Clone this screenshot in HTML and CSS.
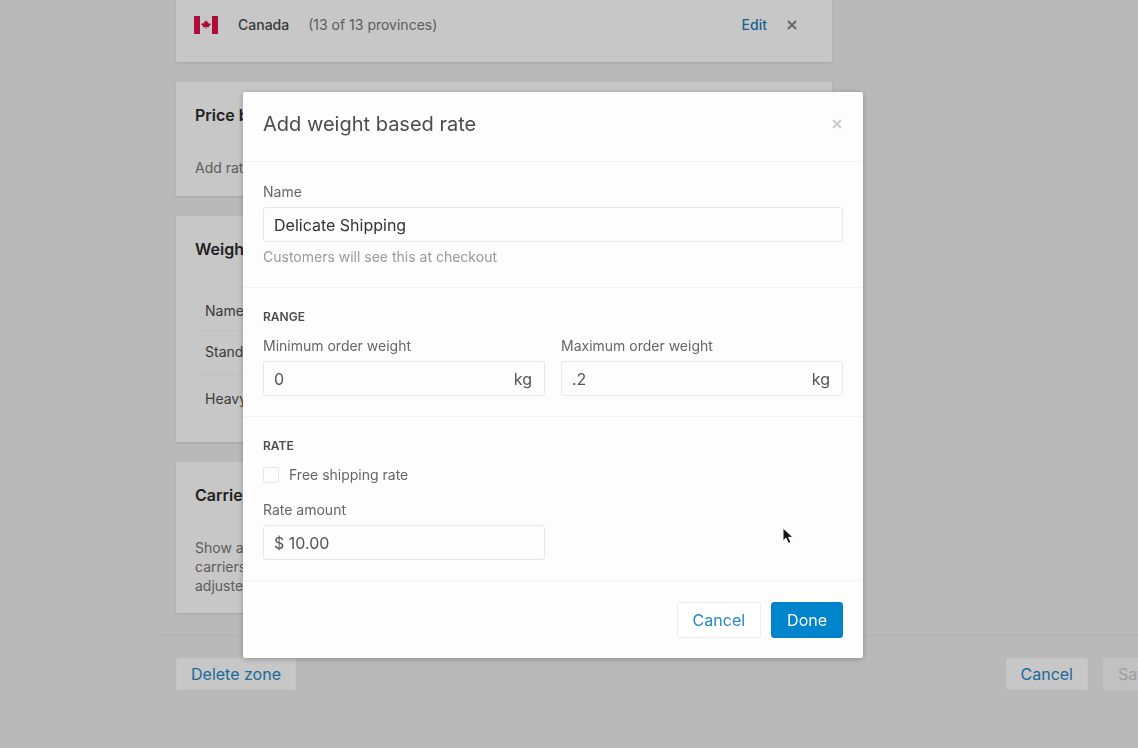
FILE: index.html
```html
<!DOCTYPE html>
<html lang="en">
<head>
    <meta charset="UTF-8">
    <meta name="viewport" content="width=device-width, initial-scale=1.0">
    <title>Shipping zone</title>
    <link rel="stylesheet" href="styles.css">
</head>
<body>
    <main class="page">
        <section class="card country">
            <svg class="flag" viewBox="0 0 26 20" aria-hidden="true">
                <path d="M1 1h6v18H1zM19 1h6v18h-6z"/>
                <path d="M13 5l1 2 1.200-.6-.3 2.400 1.500-1 .4 1 1.400.2-2.300 2.300.2 1-2.700-.4V14h-.8v-2.100l-2.700.4.200-1-2.300-2.300 1.400-.2.400-1 1.500 1-.3-2.400L12 7z"/>
            </svg>
            <strong>Canada</strong>
            <span class="provinces">(13 of 13 provinces)</span>
            <a href="#">Edit</a>
            <button class="close" aria-label="Remove Canada">
                <svg viewBox="0 0 10 10"><path d="M1 1l8 8M9 1l-8 8"/></svg>
            </button>
        </section>
        <section class="card">
            <h2>Price based rates</h2>
            <p>Add rates</p>
        </section>
        <section class="card">
            <h2>Weight based rates</h2>
            <table>
                <tr><th>Name</th></tr>
                <tr><td>Standard Shipping</td></tr>
                <tr><td>Heavy Shipping</td></tr>
            </table>
        </section>
        <section class="card">
            <h2>Carrier rates</h2>
            <p class="lines">Show all rates from<br>carriers or apps<br>adjusted at checkout</p>
        </section>
    </main>
    <footer class="page-footer">
        <button class="btn small">Delete zone</button>
        <button class="btn small push">Cancel</button>
        <button class="btn small" disabled>Save</button>
    </footer>

    <div class="overlay">
        <form class="modal" role="dialog" aria-labelledby="modal-title">
            <header>
                <h1 id="modal-title">Add weight based rate</h1>
                <button type="button" class="close" aria-label="Close">
                    <svg viewBox="0 0 10 10"><path d="M1 1l8 8M9 1l-8 8"/></svg>
                </button>
            </header>
            <section>
                <label for="name">Name</label>
                <div class="field dark"><input type="text" id="name" value="Delicate Shipping"></div>
                <p class="help">Customers will see this at checkout</p>
            </section>
            <section>
                <h3>RANGE</h3>
                <div class="columns">
                    <div>
                        <label for="min">Minimum order weight</label>
                        <div class="field"><input type="text" id="min" value="0"><span>kg</span></div>
                    </div>
                    <div>
                        <label for="max">Maximum order weight</label>
                        <div class="field"><input type="text" id="max" value=".2"><span>kg</span></div>
                    </div>
                </div>
            </section>
            <section>
                <h3>RATE</h3>
                <div class="check">
                    <input type="checkbox" id="free">
                    <label for="free">Free shipping rate</label>
                </div>
                <div class="columns">
                    <div>
                        <label for="amount">Rate amount</label>
                        <div class="field"><input type="text" id="amount" value="$ 10.00"></div>
                    </div>
                </div>
            </section>
            <div class="actions">
                <button type="button" class="btn">Cancel</button>
                <button type="button" class="btn primary">Done</button>
            </div>
            <svg class="cursor" viewBox="0 0 12 18" aria-hidden="true">
                <path d="M1 1v13l3-3 2.500 5.500 2.500-1.200-2.500-5H11z"/>
            </svg>
        </form>
    </div>
</body>
</html>
```
FILE: styles.css
```css
* {
    box-sizing: border-box;
}
body {
    margin: 0;
    min-height: 100vh;
    overflow: hidden;
    background-color: #eeeeee;
    color: #4c4c4c;
    font-family: Inter, sans-serif;
    font-size: 14px;
    line-height: 20px;
}
h1, h2, h3, p {
    margin: 0;
}
a {
    color: #1c7fba;
    font-weight: 500;
    text-decoration: none;
}
button, input {
    font-family: inherit;
}

/* page behind the dialog */
.page {
    display: flex;
    flex-direction: column;
    gap: 20px;
    margin: 0 306px 0 176px;
}
.card {
    padding: 21px 19px 18px;
    background-color: #fff;
    box-shadow: 0 1px 2px rgba(0,0,0,0.12);
}
.card h2 {
    margin-bottom: 31px;
    color: #2b2b2b;
    font-size: 16px;
    font-weight: 600;
    line-height: 24px;
}
.card p {
    color: #777;
}
.card .lines {
    line-height: 19px;
}
.country {
    display: flex;
    align-items: center;
    padding: 13px 35px 25px 17px;
    line-height: 24px;
}
.flag {
    width: 26px;
    height: 20px;
    margin-right: 19px;
    fill: #dd124a;
}
.country strong {
    font-weight: 500;
}
.provinces {
    margin: 0 auto 0 19px;
    color: #777;
}
.card table {
    width: 100%;
    border-collapse: collapse;
}
.card th, .card td {
    height: 44px;
    padding: 0 10px;
    border-bottom: 1px solid #f5f5f5;
    font-weight: 400;
    text-align: left;
}
.card th {
    height: 38px;
}
.card tr:last-child td {
    height: 50px;
    border-bottom: 0;
}
.page-footer {
    display: flex;
    gap: 15px;
    margin: 22px -32px 0 160px;
    padding: 22px 0 0 16px;
    border-top: 1px solid #e6e6ea;
}
.push {
    margin-left: auto;
}

/* controls */
.btn {
    height: 36px;
    padding: 0 15px;
    border: 1px solid #e9edef;
    border-radius: 3px;
    background-color: #fff;
    color: #2589c4;
    font-size: 16px;
}
.btn.small {
    height: 32px;
    padding: 0 14px;
    border-color: #fafafa;
    border-radius: 2px;
}
.btn:disabled {
    background-color: #f8f8f8;
    color: #ccc;
}
.btn.primary {
    border-color: #0080c8;
    background-color: #0084cc;
    color: #fff;
}
.close {
    display: flex;
    padding: 0;
    border: 0;
    background: none;
}
.close svg {
    width: 10px;
    height: 10px;
    fill: none;
    stroke: #ccc;
    stroke-width: 2;
}
.country .close {
    margin-left: 20px;
}
.country .close svg {
    stroke: #888;
}

/* dialog */
.overlay {
    position: fixed;
    inset: 0;
    display: flex;
    justify-content: center;
    align-items: flex-start;
    padding: 92px 32px 0 0;
    background-color: rgba(0,0,0,0.22);
}
.modal {
    position: relative;
    width: 620px;
    border-radius: 2px;
    background-color: #fdfdfd;
    box-shadow: 0 1px 6px rgba(0,0,0,0.25);
}
.modal header {
    display: flex;
    justify-content: space-between;
    align-items: center;
    height: 70px;
    padding: 0 21px 6px 20px;
    border-bottom: 1px solid #f3f3f3;
}
.modal h1 {
    font-size: 20px;
    font-weight: 400;
}
.modal section {
    padding: 20px;
    border-bottom: 1px solid #f3f3f3;
}
.modal h3 {
    margin-bottom: 10px;
    font-size: 12px;
    font-weight: 600;
    line-height: 18px;
}
.modal label {
    display: block;
    color: #666;
}
.field {
    display: flex;
    align-items: center;
    height: 35px;
    margin-top: 5px;
    padding: 0 12px 0 10px;
    border: 1px solid #e8e8e8;
    border-radius: 3px;
    color: #555;
    font-size: 16px;
}
.field input {
    flex: 1;
    min-width: 0;
    padding: 0;
    border: 0;
    outline: 0;
    background: none;
    color: inherit;
    font-size: 16px;
}
.field.dark {
    color: #333;
}
.help {
    margin-top: 5px;
    color: #999;
}
.columns {
    display: grid;
    grid-template-columns: repeat(2, minmax(0, 1fr));
    gap: 16px;
}
.check {
    display: flex;
    align-items: center;
    gap: 10px;
    margin-bottom: 15px;
}
.check input {
    width: 16px;
    height: 16px;
    margin: 0;
    border: 1px solid #e6e6e6;
    border-radius: 2px;
    appearance: none;
}
.actions {
    display: flex;
    justify-content: flex-end;
    gap: 10px;
    padding: 21px 20px 20px;
}
.cursor {
    position: absolute;
    top: 435px;
    left: 539px;
    width: 12px;
    height: 18px;
    fill: #111;
    stroke: #fff;
}
```
